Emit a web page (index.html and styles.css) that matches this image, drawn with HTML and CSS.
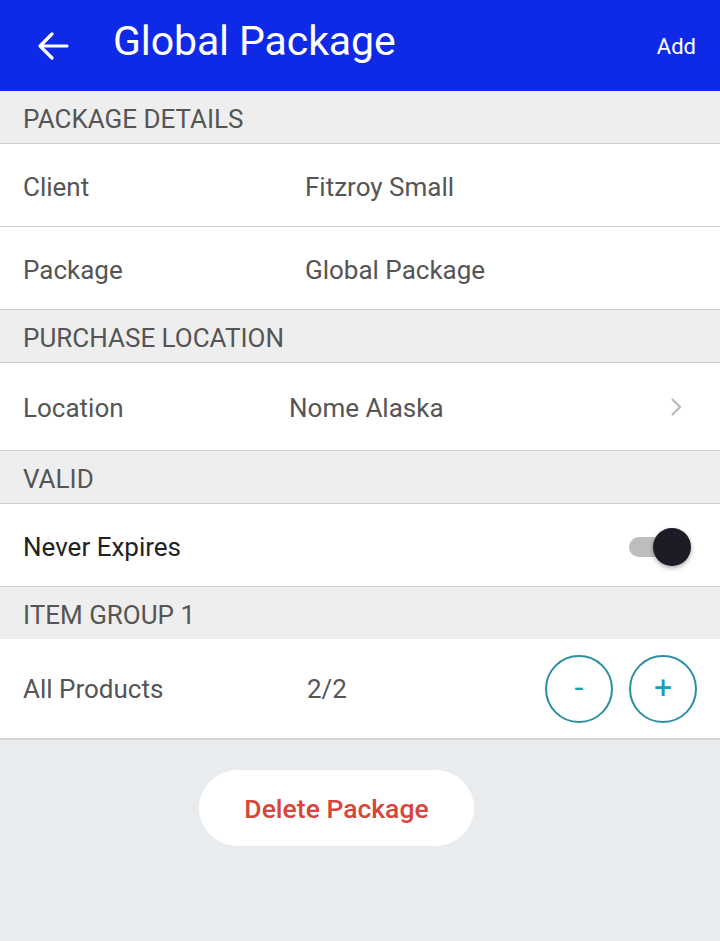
FILE: index.html
```html
<!DOCTYPE html>
<html>
<head>
<meta charset="utf-8">
<link rel="stylesheet" href="styles.css">
</head>
<body>
<header class="appbar">
  <svg class="back" width="32" height="30" viewBox="0 0 32 30"><path d="M30 15H4M15 3L3 15l12 12" fill="none" stroke="#fff" stroke-width="3.2" stroke-linecap="round" stroke-linejoin="round"/></svg>
  <h1 class="title">Global Package</h1>
  <span class="add">Add</span>
</header>
<div class="section">PACKAGE DETAILS</div>
<div class="row"><span class="label">Client</span><span class="value">Fitzroy Small</span></div>
<div class="row"><span class="label">Package</span><span class="value">Global Package</span></div>
<div class="section">PURCHASE LOCATION</div>
<div class="row row-loc"><span class="label">Location</span><span class="value value-loc">Nome Alaska</span>
  <svg class="chev" width="14" height="22" viewBox="0 0 14 22"><path d="M3 3l8 8-8 8" fill="none" stroke="#bdbdbd" stroke-width="2.4"/></svg>
</div>
<div class="section">VALID</div>
<div class="row"><span class="label dark">Never Expires</span>
  <div class="toggle"><span class="track"></span><span class="knob"></span></div>
</div>
<div class="section no-border">ITEM GROUP 1</div>
<div class="row row-items"><span class="label">All Products</span><span class="value value-count">2/2</span>
  <div class="steppers"><span class="circle">-</span><span class="circle">+</span></div>
</div>
<div class="footer">
  <button class="delete">Delete Package</button>
</div>
</body>
</html>
```
FILE: styles.css
```css
* { box-sizing: border-box; }
html, body { margin: 0; padding: 0; }
body {
  width: 720px;
  height: 941px;
  font-family: Roboto, "Noto Sans", sans-serif;
  background: #e9ecef;
  overflow: hidden;
}
.appbar {
  height: 91px;
  background: #0f2ae6;
  display: flex;
  align-items: center;
  padding: 0 24px 0 37px;
  color: #fff;
}
.back { margin-top: 1px; }
.title {
  margin: 0 0 10px 44px;
  font-weight: 400;
  font-size: 41px;
  flex: 1;
  letter-spacing: -0.1px;
}
.add { font-size: 22px; margin-top: 2px; }
.section {
  height: 53px;
  background: #eeeeee;
  border-bottom: 1px solid #cfcfcf;
  display: flex;
  align-items: center;
  padding-left: 23px;
  font-size: 26px;
  color: #555;
  padding-top: 3px;
}
.section.no-border { border-bottom: none; height: 52px; }
.row {
  height: 83px;
  background: #fff;
  border-bottom: 1px solid #cfcfcf;
  display: flex;
  align-items: center;
  padding-left: 23px;
  padding-top: 3px;
  font-size: 26px;
  color: #555;
}
.label { width: 282px; }
.label.dark { color: #222; flex: 1; }
.row-loc { height: 88px; }
.value-loc { margin-left: -16px; flex: 1; }
.chev { margin-right: 37px; margin-top: -3px; }
.toggle {
  position: relative;
  width: 62px;
  height: 40px;
  margin-right: 29px;
}
.track {
  position: absolute;
  left: 0; top: 10px;
  width: 50px; height: 20px;
  border-radius: 10px;
  background: #bdbdbd;
}
.knob {
  position: absolute;
  right: 0; top: 1px;
  width: 38px; height: 38px;
  border-radius: 50%;
  background: #1c1c26;
  box-shadow: 0 2px 4px rgba(0,0,0,0.35);
}
.row-items { height: 101px; border-bottom: 2px solid #d6d6d6; padding-top: 0; }
.value-count { flex: 1; margin-left: 2px; }
.steppers { display: flex; gap: 16px; margin-right: 23px; }
.circle {
  width: 68px; height: 68px;
  border-radius: 50%;
  border: 2px solid #2b8fa0;
  display: flex; align-items: center; justify-content: center;
  color: #1d9db2;
  font-size: 32px;
  padding-bottom: 3px;
}
.footer {
  display: flex;
  justify-content: center;
  padding-top: 30px;
}
.delete {
  width: 275px; height: 76px;
  border: none;
  border-radius: 38px;
  background: #fff;
  color: #d8453b;
  font-family: Roboto, sans-serif;
  font-weight: 500;
  font-size: 26.5px;
  margin-right: 47px;
}
```
